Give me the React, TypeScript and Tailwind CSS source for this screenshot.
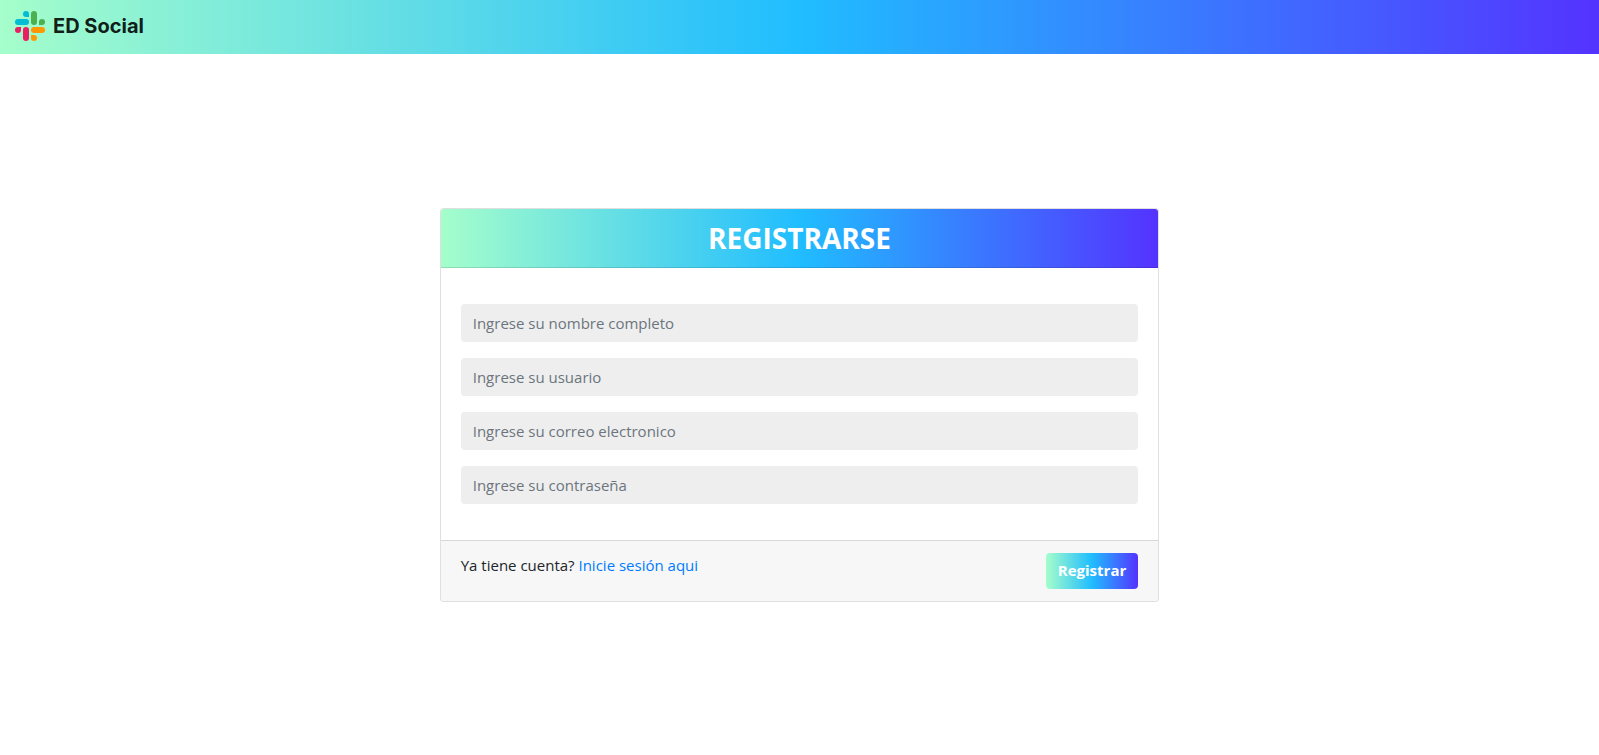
function Logo() {
  return (
    <svg viewBox="0 0 90 90" className="size-[30px]" aria-hidden="true">
      <g fill="#00bcd4">
        <path d="M33 0a9 9 0 0 0 0 18h9V9a9 9 0 0 0-9-9z" />
        <rect x="0" y="24" width="42" height="18" rx="9" />
      </g>
      <g fill="#4caf50">
        <rect x="48" y="0" width="18" height="42" rx="9" />
        <path d="M90 33a9 9 0 0 0-18 0v9h9a9 9 0 0 0 9-9z" />
      </g>
      <g fill="#ff9800">
        <rect x="48" y="48" width="42" height="18" rx="9" />
        <path d="M57 90a9 9 0 0 0 0-18h-9v9a9 9 0 0 0 9 9z" />
      </g>
      <g fill="#e91e63">
        <rect x="24" y="48" width="18" height="42" rx="9" />
        <path d="M0 57a9 9 0 0 0 18 0v-9H9a9 9 0 0 0-9 9z" />
      </g>
    </svg>
  );
}

const fields = [
  { name: "nombre", type: "text", label: "Ingrese su nombre completo" },
  { name: "usuario", type: "text", label: "Ingrese su usuario" },
  { name: "correo", type: "email", label: "Ingrese su correo electronico" },
  { name: "contrasena", type: "password", label: "Ingrese su contraseña" },
];

export default function App() {
  return (
    <div className="flex min-h-screen flex-col bg-white font-['Open_Sans',sans-serif] text-[15px] text-[#212529]">
      <nav className="flex items-center bg-[linear-gradient(to_right,#a5fecb,#20bdff,#5433ff)] px-[15px] pt-[11px] pb-[13px]">
        <a
          href="#inicio"
          className="flex items-center gap-2 font-['Inter',sans-serif] text-xl leading-[30px] font-bold text-black/90"
        >
          <Logo />
          ED Social
        </a>
      </nav>

      <main className="flex grow items-center justify-center">
        <form
          className="w-[45%] min-w-80 overflow-hidden rounded border border-black/[.125] bg-white"
          onSubmit={(e) => e.preventDefault()}
        >
          <header className="border-b border-black/[.125] bg-[linear-gradient(to_right,#a5fecb,#20bdff,#5433ff)] px-5 py-3">
            <h1 className="text-center text-[28px] leading-[34px] font-bold text-white">REGISTRARSE</h1>
          </header>

          <div className="flex flex-col gap-4 px-5 py-9">
            {fields.map((field) => (
              <input
                key={field.name}
                name={field.name}
                type={field.type}
                aria-label={field.label}
                placeholder={field.label}
                className="h-[38px] w-full rounded bg-[#eeeeee] px-3 text-[#495057] placeholder:text-[#6c757d]"
              />
            ))}
          </div>

          <footer className="flex items-start justify-between border-t border-black/[.125] bg-[#f7f7f7] px-5 py-3">
            <p className="leading-6">
              Ya tiene cuenta?{" "}
              <a href="#login" className="text-[#007bff]">
                Inicie sesión aqui
              </a>
            </p>
            <button
              type="submit"
              className="h-9 rounded bg-[linear-gradient(to_right,#a5fecb,#20bdff,#5433ff)] px-3 font-bold text-white"
            >
              Registrar
            </button>
          </footer>
        </form>
      </main>
    </div>
  );
}
